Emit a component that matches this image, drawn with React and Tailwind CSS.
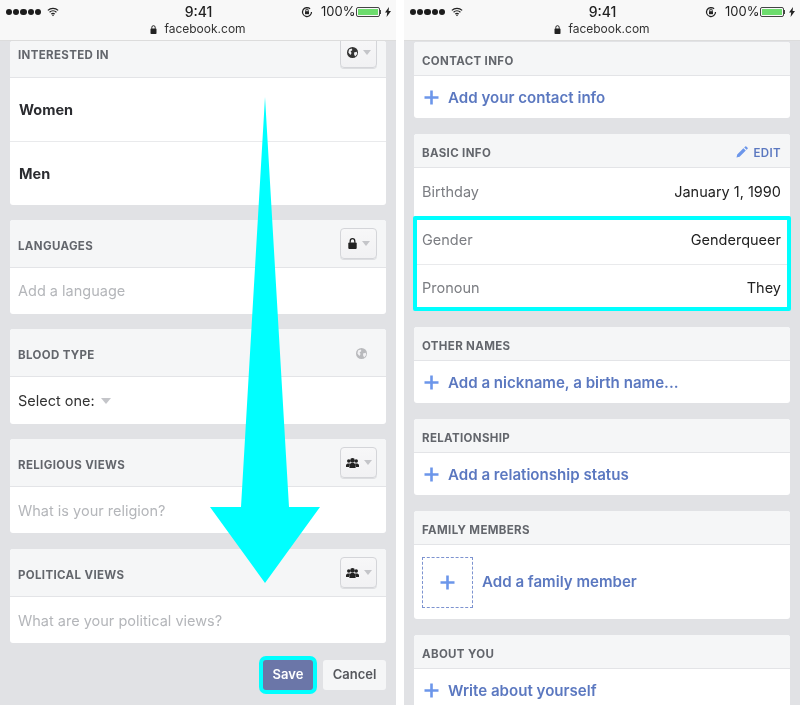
import React from 'react';

const font = { fontFamily: 'Inter' };

// status bar + address bar, same on both phones
const StatusBar = () => (
  <div className="h-[41px] shrink-0 bg-[#f8f8f8] border-b border-[#dcdcdc] text-[#222]">
    <div className="grid grid-cols-[1fr_auto_1fr] items-center h-[20px] pl-[6px] pr-[5px] pt-[1px]">
      <div className="flex items-center">
        <div className="flex gap-[1px] w-[41px]">
          {[0, 1, 2, 3, 4].map((i) => (
            <span key={i} className="w-[6.2px] h-[6px] rounded-full bg-[#1c1c1c]" />
          ))}
        </div>
        <svg width="12" height="10" viewBox="0 0 14 11">
          <path d="M1 3.6a8.6 8.6 0 0 1 12 0M3 5.8a5.8 5.8 0 0 1 8 0M5 8a2.8 2.8 0 0 1 4 0" fill="none" stroke="#222" strokeWidth="1.4" />
          <path d="M5.8 9 7 10.4 8.2 9a1.8 1.8 0 0 0-2.4 0z" fill="#222" />
        </svg>
      </div>
      <span className="text-[14px] font-medium text-center">9:41</span>
      <div className="flex items-center justify-end">
        <svg width="12" height="12" viewBox="0 0 12 12" className="mr-[8px]">
          <path d="M10.5 6a4.5 4.5 0 1 1-1.4-3.2" fill="none" stroke="#222" strokeWidth="1.2" />
          <rect x="4" y="5.2" width="4" height="3" fill="#222" />
          <path d="M4.8 5.2V4.2a1.2 1.2 0 0 1 2.4 0v1" fill="none" stroke="#222" />
        </svg>
        <span className="text-[13px] w-[32px]">100%</span>
        <div className="ml-[3px] w-[24px] h-[10px] border border-[#444] rounded-[2px] p-[1px]">
          <div className="h-full bg-[#6ddc6d]" />
        </div>
        <span className="w-[1px] h-[4px] bg-[#444]" />
        <svg width="6" height="10" viewBox="0 0 6 10" className="ml-[4px]">
          <path d="M4 0 0 5.6h2.2L1.6 10 6 4H3.6z" fill="#222" />
        </svg>
      </div>
    </div>
    <div className="flex items-center justify-center gap-[7px] h-[18px] text-[12px] text-[#333]">
      <svg width="7" height="9" viewBox="0 0 7 9">
        <rect x="0.5" y="3.6" width="6" height="5.4" rx="0.8" fill="#222" />
        <path d="M1.8 3.8V2.4a1.7 1.7 0 0 1 3.4 0v1.4" fill="none" stroke="#222" strokeWidth="1" />
      </svg>
      <span>facebook.com</span>
    </div>
  </div>
);

const Globe = ({ color = '#333' }) => (
  <svg width="11" height="11" viewBox="0 0 11 11">
    <circle cx="5.5" cy="5.5" r="5.5" fill={color} />
    <path d="M2 2.6 4.6 1.4 5.4 3 3.6 4.4 4.6 6 3.4 8 1.4 5.4zM7 5.4l2.8-.6.4 2.2-2 2.4-1-1.6z" fill="#f1f1f3" />
  </svg>
);

const Lock = () => (
  <svg width="9" height="11" viewBox="0 0 9 11">
    <rect x="0.3" y="4.4" width="8.4" height="6.6" rx="1" fill="#222" />
    <path d="M2.2 4.8V3a2.3 2.3 0 0 1 4.6 0v1.8" fill="none" stroke="#222" strokeWidth="1.3" />
  </svg>
);

const Friends = () => (
  <svg width="13" height="10" viewBox="0 0 13 10">
    <circle cx="2.8" cy="3" r="1.8" fill="#222" />
    <circle cx="10.2" cy="3" r="1.8" fill="#222" />
    <circle cx="6.5" cy="2.4" r="2.3" fill="#222" />
    <path d="M0 9V6.8L1.6 5.4H4L3 9zM13 9V6.8L11.4 5.4H9L10 9z" fill="#222" />
    <path d="M3.4 10V6.6L5 5h3l1.6 1.6V10z" fill="#222" />
  </svg>
);

const Privacy = ({ icon }) => (
  <div className="w-[37px] h-[31px] rounded-[4px] border border-[#d4d5d9] bg-gradient-to-b from-[#f7f7f8] to-[#f1f1f3] shadow-[0_1px_0_#dcdde0] flex items-center justify-center gap-[5px]">
    {icon}
    <span className="w-0 h-0 border-x-[4px] border-x-transparent border-t-[5px] border-t-[#c4c5c9]" />
  </div>
);

const Card = ({ title, right, headerClass = 'h-[48px] items-center', cardClass = '', children }) => (
  <div className={`mx-[10px] shrink-0 rounded-[3px] overflow-hidden bg-white ${cardClass}`}>
    <div className={`${headerClass} bg-[#f5f6f7] border-b border-[#e3e4e7] pl-[8px] pr-[9px] flex justify-between`}>
      <span className="pt-[6px] text-[11.5px] font-bold tracking-[0.35px] text-[#63666c]">{title}</span>
      {right}
    </div>
    {children}
  </div>
);

const Placeholder = ({ children, className = '' }) => (
  <div className={`h-[46px] pl-[8px] flex items-center text-[14.5px] text-[#b4b6ba] ${className}`}>{children}</div>
);

const Plus = () => (
  <svg width="15" height="15" viewBox="0 0 15 15" className="shrink-0">
    <path d="M7.5 0.5v14M0.5 7.5h14" stroke="#6c96ea" strokeWidth="2.6" />
  </svg>
);

const AddRow = ({ children }) => (
  <div className="h-[42px] pl-[10px] flex items-center gap-[9px] text-[15.1px] font-semibold text-[#5b78c0]">
    <Plus />
    <span className="pt-[2px]">{children}</span>
  </div>
);

const SmallCard = ({ title, right, children }) => (
  <Card title={title} right={right} headerClass="h-[34px] items-center">
    {children}
  </Card>
);

const InfoRow = ({ label, value, className = 'h-[48px]' }) => (
  <div className={`${className} pl-[8px] pr-[9px] flex items-center justify-between text-[14.5px]`}>
    <span className="text-[#7b7d82]">{label}</span>
    <span className="text-[#222]">{value}</span>
  </div>
);

const LeftPhone = () => (
  <div className="relative w-[396px] h-[705px] bg-[#e1e2e5] flex flex-col overflow-hidden">
    <StatusBar />
    <div className="flex flex-col gap-[15px]">
      <Card title="INTERESTED IN" headerClass="h-[37px] items-start" right={<div className="-mt-[4px]"><Privacy icon={<Globe />} /></div>}>
        <div className="h-[63px] pl-[9px] flex items-center text-[14.5px] font-bold text-[#2b2c30]">Women</div>
        <div className="h-[64px] pl-[9px] flex items-center text-[14.5px] font-bold text-[#2b2c30] border-t border-[#e9eaec]">Men</div>
      </Card>
      <Card title="LANGUAGES" right={<Privacy icon={<Lock />} />}>
        <Placeholder>Add a language</Placeholder>
      </Card>
      <Card title="BLOOD TYPE" right={<div className="pr-[10px] pt-[2px]"><Globe color="#b9babd" /></div>}>
        <div className="h-[47px] pl-[8px] flex items-center gap-[6px] text-[14.5px] text-[#333]">
          Select one:
          <span className="w-0 h-0 border-x-[5px] border-x-transparent border-t-[6px] border-t-[#c4c5c9]" />
        </div>
      </Card>
      <Card title="RELIGIOUS VIEWS" right={<Privacy icon={<Friends />} />}>
        <Placeholder className="pt-[2px]">What is your religion?</Placeholder>
      </Card>
      <Card title="POLITICAL VIEWS" cardClass="mt-[1px]" right={<Privacy icon={<Friends />} />}>
        <Placeholder className="pt-[2px]">What are your political views?</Placeholder>
      </Card>
    </div>
    <div className="flex justify-end gap-[10px] pr-[10px] pt-[17px]">
      <div className="w-[50px] h-[30px] rounded-[3px] bg-[#6b76a8] text-white text-[13px] font-semibold flex items-center justify-center ring-[4px] ring-[#00ffff]">Save</div>
      <div className="w-[63px] h-[30px] rounded-[3px] bg-[#f5f6f7] text-[#55575c] text-[13px] font-semibold flex items-center justify-center">Cancel</div>
    </div>
    <svg width="396" height="705" className="absolute left-0 top-0 pointer-events-none">
      <path d="M265 97 289 507H320L265 583 210 507H241z" fill="#00ffff" />
    </svg>
  </div>
);

const RightPhone = () => (
  <div className="w-[396px] h-[705px] bg-[#e1e2e5] flex flex-col overflow-hidden">
    <StatusBar />
    <div className="flex flex-col gap-[16px] pt-[1px]">
      <SmallCard title="CONTACT INFO">
        <AddRow>Add your contact info</AddRow>
      </SmallCard>
      <div className="relative">
        <SmallCard
          title="BASIC INFO"
          right={
            <span className="pt-[6px] flex items-center gap-[6px] text-[11.5px] font-semibold tracking-[0.35px] text-[#5b78c0]">
              <svg width="12" height="12" viewBox="0 0 12 12" className="-mt-[3px]">
                <path d="M0.5 11.5 1.2 8.4 7.4 2.2 9.8 4.6 3.6 10.8zM8.2 1.4 9.2 0.4a.8.8 0 0 1 1.1 0l1.3 1.3a.8.8 0 0 1 0 1.1l-1 1z" fill="#6c96ea" />
              </svg>
              EDIT
            </span>
          }
        >
          <InfoRow label="Birthday" value="January 1, 1990" />
          <InfoRow label="Gender" value="Genderqueer" />
          <InfoRow label="Pronoun" value="They" className="h-[47px] border-t border-[#e9eaec]" />
        </SmallCard>
        <div className="absolute left-[9px] right-[9px] top-[82px] h-[95px] border-[4px] border-[#00ffff] rounded-[2px]" />
      </div>
      <SmallCard title="OTHER NAMES">
        <AddRow>Add a nickname, a birth name...</AddRow>
      </SmallCard>
      <SmallCard title="RELATIONSHIP">
        <AddRow>Add a relationship status</AddRow>
      </SmallCard>
      <SmallCard title="FAMILY MEMBERS">
        <div className="h-[74px] pl-[8px] flex items-center gap-[9px] text-[15.1px] font-semibold text-[#5b78c0]">
          <div className="w-[51px] h-[51px] border border-dashed border-[#7d93d0] flex items-center justify-center">
            <Plus />
          </div>
          Add a family member
        </div>
      </SmallCard>
      <SmallCard title="ABOUT YOU">
        <AddRow>Write about yourself</AddRow>
      </SmallCard>
    </div>
  </div>
);

export default function App() {
  return (
    <div style={font} className="w-[800px] h-[705px] bg-white flex justify-between overflow-hidden blur-[0.4px]">
      <LeftPhone />
      <RightPhone />
    </div>
  );
}
